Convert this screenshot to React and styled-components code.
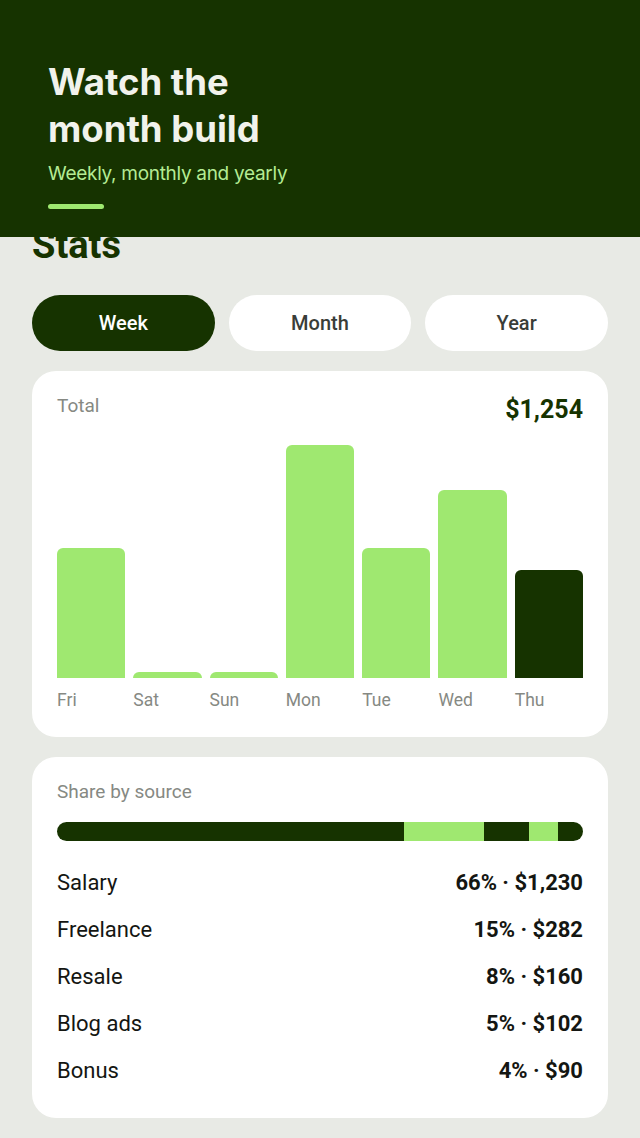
import React from 'react';
import styled, { createGlobalStyle } from 'styled-components';

const GlobalStyle = createGlobalStyle`
    * { box-sizing: border-box; }
    body {
        margin: 0;
        background: #e8eae5;
        font-family: Roboto, "Noto Sans", sans-serif;
    }
`;

const Page = styled.div`
    position: relative;
    width: 640px;
    min-height: 1138px;
`;

const Header = styled.header`
    position: absolute;
    top: 0;
    left: 0;
    right: 0;
    z-index: 2;
    height: 237px;
    background: #163300;
    padding: 59px 48px 0;
`;

const Title = styled.h1`
    margin: 0;
    font-family: Inter, sans-serif;
    font-size: 36.5px;
    line-height: 47px;
    font-weight: 700;
    color: #f1f2ec;
`;

const Subtitle = styled.p`
    margin: 9px 0 0;
    font-family: Inter, sans-serif;
    font-size: 19px;
    line-height: 24px;
    color: #b4ec94;
    letter-spacing: -0.3px;
`;

const Accent = styled.div`
    margin-top: 18px;
    width: 56px;
    height: 5px;
    border-radius: 3px;
    background: #9fe870;
`;

const Content = styled.main`
    padding: 222px 32px 20px;
    display: flex;
    flex-direction: column;
`;

const Heading = styled.h2`
    margin: 0;
    font-size: 38px;
    line-height: 46px;
    font-weight: 700;
    color: #163300;
`;

const Tabs = styled.div`
    margin-top: 27px;
    display: grid;
    grid-template-columns: repeat(3, 1fr);
    gap: 14px;
`;

const Tab = styled.button`
    height: 56px;
    border: none;
    border-radius: 28px;
    font-family: Roboto, sans-serif;
    font-size: 20px;
    font-weight: 500;
    background: ${p => (p.$active ? '#163300' : '#ffffff')};
    color: ${p => (p.$active ? '#ffffff' : '#3a3d38')};
`;

const Card = styled.section`
    margin-top: ${p => p.$top}px;
    background: #ffffff;
    border-radius: 24px;
    padding: 24px 25px;
`;

const CardHead = styled.div`
    display: flex;
    justify-content: space-between;
    align-items: flex-start;
`;

const Label = styled.div`
    font-size: 19px;
    line-height: 22px;
    color: #868983;
`;

const Total = styled.div`
    font-size: 25px;
    line-height: 30px;
    font-weight: 700;
    color: #163300;
`;

const Chart = styled.div`
    margin-top: 20px;
    height: 233px;
    display: grid;
    grid-template-columns: repeat(7, 1fr);
    gap: 8px;
    align-items: end;
`;

const Bar = styled.div`
    border-radius: 6px 6px 0 0;
    background: ${p => (p.$current ? '#163300' : '#9fe870')};
`;

const Days = styled.div`
    margin-top: 12px;
    margin-bottom: 3px;
    display: grid;
    grid-template-columns: repeat(7, 1fr);
    gap: 8px;
    font-size: 17.5px;
    line-height: 20px;
    color: #868983;
`;

const ShareBar = styled.div`
    margin-top: 19px;
    height: 19px;
    border-radius: 10px;
    overflow: hidden;
    display: flex;
`;

const Segment = styled.div`
    background: ${p => (p.$light ? '#9fe870' : '#163300')};
`;

const Rows = styled.div`
    margin-top: 18px;
    display: flex;
    flex-direction: column;
`;

const Row = styled.div`
    height: 47px;
    display: flex;
    align-items: center;
    justify-content: space-between;
    font-size: 22px;
    color: #141612;
`;

const Value = styled.span`
    font-weight: 700;
`;

const days = [
    { day: 'Fri', amount: 203 },
    { day: 'Sat', amount: 10 },
    { day: 'Sun', amount: 10 },
    { day: 'Mon', amount: 365 },
    { day: 'Tue', amount: 203 },
    { day: 'Wed', amount: 294 },
    { day: 'Thu', amount: 169, current: true },
];

const sources = [
    { name: 'Salary', pct: 66, amount: 1230 },
    { name: 'Freelance', pct: 15, amount: 282 },
    { name: 'Resale', pct: 8, amount: 160 },
    { name: 'Blog ads', pct: 5, amount: 102 },
    { name: 'Bonus', pct: 4, amount: 90 },
];

const max = Math.max(...days.map(d => d.amount));

const App = () => {
    return (
        <Page>
            <GlobalStyle />
            <Header>
                <Title>Watch the<br />month build</Title>
                <Subtitle>Weekly, monthly and yearly</Subtitle>
                <Accent />
            </Header>
            <Content>
                <Heading>Stats</Heading>
                <Tabs>
                    <Tab $active>Week</Tab>
                    <Tab>Month</Tab>
                    <Tab>Year</Tab>
                </Tabs>
                <Card $top={20}>
                    <CardHead>
                        <Label>Total</Label>
                        <Total>$1,254</Total>
                    </CardHead>
                    <Chart>
                        {days.map(d => (
                            <Bar
                                key={d.day}
                                $current={d.current}
                                style={{ height: `${(d.amount / max) * 233}px` }}
                            />
                        ))}
                    </Chart>
                    <Days>
                        {days.map(d => <span key={d.day}>{d.day}</span>)}
                    </Days>
                </Card>
                <Card $top={20}>
                    <Label>Share by source</Label>
                    <ShareBar>
                        {sources.map((s, i) => (
                            <Segment key={s.name} $light={i % 2 === 1} style={{ flex: s.amount }} />
                        ))}
                    </ShareBar>
                    <Rows>
                        {sources.map(s => (
                            <Row key={s.name}>
                                <span>{s.name}</span>
                                <Value>{s.pct}% · ${s.amount.toLocaleString('en-US')}</Value>
                            </Row>
                        ))}
                    </Rows>
                </Card>
            </Content>
        </Page>
    );
};

export default App;
